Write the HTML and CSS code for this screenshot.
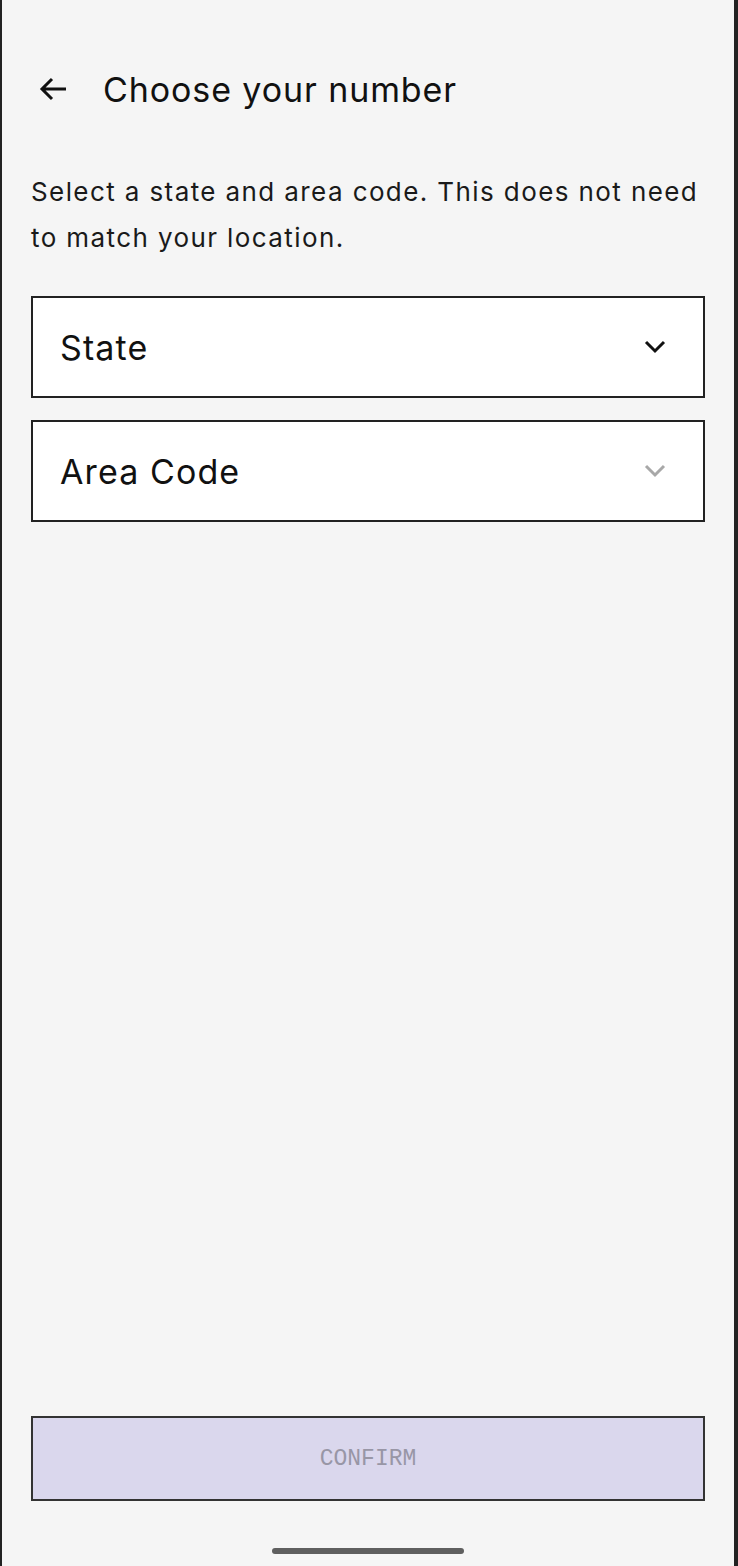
FILE: index.html
```html
<!DOCTYPE html>
<html lang="en">
<head>
    <meta charset="UTF-8">
    <meta name="viewport" content="width=device-width, initial-scale=1.0">
    <title>Choose your number</title>
    <link rel="stylesheet" href="styles.css">
</head>
<body>
    <div id="screen">
        <div id="header">
            <svg class="back" width="32" height="32" viewBox="0 0 32 32">
                <path d="M29 16H5M15 6L5 16l10 10" fill="none" stroke="#111" stroke-width="3"/>
            </svg>
            <h1>Choose your number</h1>
        </div>

        <p class="intro">Select a state and area code. This does not need to match your location.</p>

        <div class="field">
            <span>State</span>
            <svg class="chevron" width="24" height="24" viewBox="0 0 24 24">
                <path d="M3 7l9 9 9-9" fill="none" stroke="#111" stroke-width="3"/>
            </svg>
        </div>
        <div class="field">
            <span>Area Code</span>
            <svg class="chevron" width="24" height="24" viewBox="0 0 24 24">
                <path d="M3 7l9 9 9-9" fill="none" stroke="#a8a8a8" stroke-width="3"/>
            </svg>
        </div>

        <div class="spacer"></div>

        <button type="button" disabled>CONFIRM</button>
        <div class="home-bar"></div>
    </div>
</body>
</html>
```

FILE: styles.css
```css
body {
    margin: 0;
    padding: 0;
    background-color: #222;
    font-family: Inter, "Noto Sans", sans-serif;
    color: #111;
}

#screen {
    margin: 0 4px 0 2px;
    height: 1566px;
    background-color: #f5f5f5;
    box-sizing: border-box;
    padding: 0 29px 0 29px;
    display: flex;
    flex-direction: column;
}

#header {
    display: flex;
    align-items: center;
    gap: 34px;
    height: 60px;
    margin-top: 59px;
    padding-left: 6px;
}

#header h1 {
    margin: 0;
    font-size: 34px;
    font-weight: 400;
    letter-spacing: 0.9px;
}

.intro {
    margin: 50px 0 35px 0;
    font-size: 26px;
    line-height: 46px;
    letter-spacing: 1.4px;
    color: #1a1a1a;
}

.field {
    height: 102px;
    box-sizing: border-box;
    border: 2px solid #222;
    background-color: #fff;
    margin-bottom: 22px;
    display: flex;
    align-items: center;
    justify-content: space-between;
    padding: 0 36px 0 27px;
    font-size: 34px;
    letter-spacing: 1.1px;
}

.spacer {
    flex: 1;
}

button {
    height: 85px;
    background-color: #dad7ed;
    border: 2px solid #333;
    color: #9896a6;
    font-family: "Liberation Mono", monospace;
    font-size: 23px;
    margin-bottom: 47px;
}

.home-bar {
    width: 192px;
    height: 6px;
    border-radius: 3px;
    background-color: #5f5f5f;
    margin: 0 auto 12px auto;
}
```
